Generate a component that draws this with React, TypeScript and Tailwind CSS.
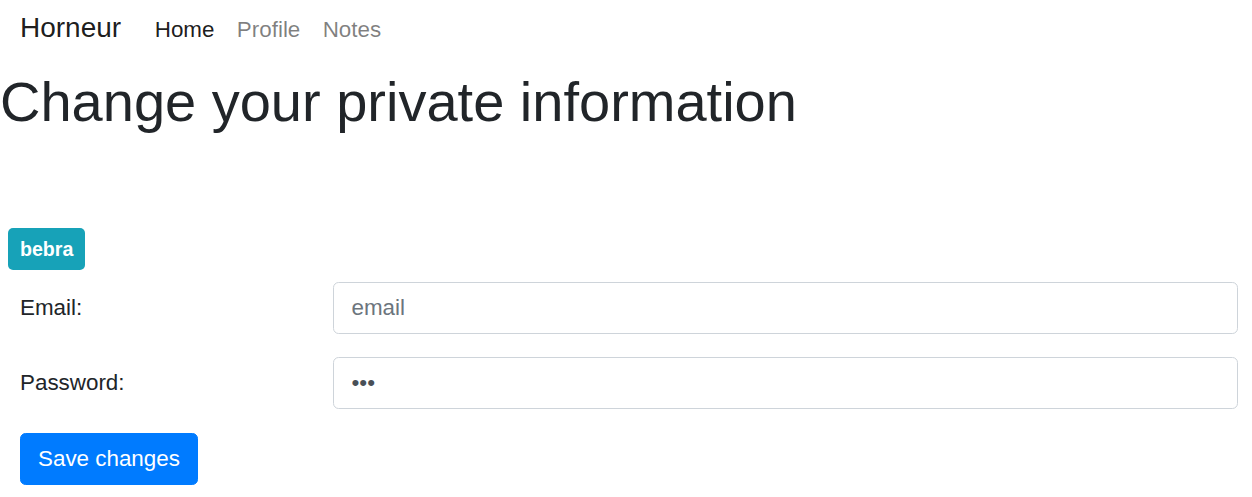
import React from "react";

export default function App() {
  const font = { fontFamily: '"Liberation Sans", Arial, sans-serif' };
  return (
    <div className="w-[1252px] h-[497px] bg-white text-[#212529] overflow-hidden" style={font}>
      <nav className="flex items-baseline pl-[20px] pt-[7px] h-[56px]">
        <span className="text-[28px] leading-[42px] text-[rgba(0,0,0,0.9)] mr-[22.4px]">Horneur</span>
        <a className="text-[22.4px] leading-[33.6px] px-[11.2px] text-[rgba(0,0,0,0.9)]">Home</a>
        <a className="text-[22.4px] leading-[33.6px] px-[11.2px] text-[rgba(0,0,0,0.5)]">Profile</a>
        <a className="text-[22.4px] leading-[33.6px] px-[11.2px] text-[rgba(0,0,0,0.5)]">Notes</a>
      </nav>
      <h1 className="mt-[12px] ml-0 text-[56px] leading-[67.2px] font-normal">Change your private information</h1>
      <div className="mt-[93px] pl-[8px]">
        <span className="inline-flex items-center h-[42px] px-[12px] rounded-[5px] bg-[#17a2b8] text-white font-bold text-[19.6px]">bebra</span>
      </div>
      <form className="mt-[12px] pl-[20px] pr-[14px]">
        <div className="flex items-center mb-[23px]">
          <label className="w-[313px] text-[22.4px] leading-[33.6px]">Email:</label>
          <input
            type="email"
            placeholder="email"
            className="flex-1 h-[52px] border border-[#ced4da] rounded-[5.6px] pl-[17.5px] pr-[16.8px] text-[22.4px] text-[#495057] placeholder:text-[#6c757d] outline-none"
          />
        </div>
        <div className="flex items-center mb-[24px]">
          <label className="w-[313px] text-[22.4px] leading-[33.6px]">Password:</label>
          <input
            type="password"
            defaultValue="123"
            className="flex-1 h-[52px] border border-[#ced4da] rounded-[5.6px] pl-[17.5px] pr-[16.8px] text-[22.4px] text-[#495057] outline-none"
          />
        </div>
        <button type="button" className="h-[52px] px-[17px] rounded-[5.6px] bg-[#007bff] text-white text-[22.4px] border border-[#007bff]">
          Save changes
        </button>
      </form>
    </div>
  );
}
